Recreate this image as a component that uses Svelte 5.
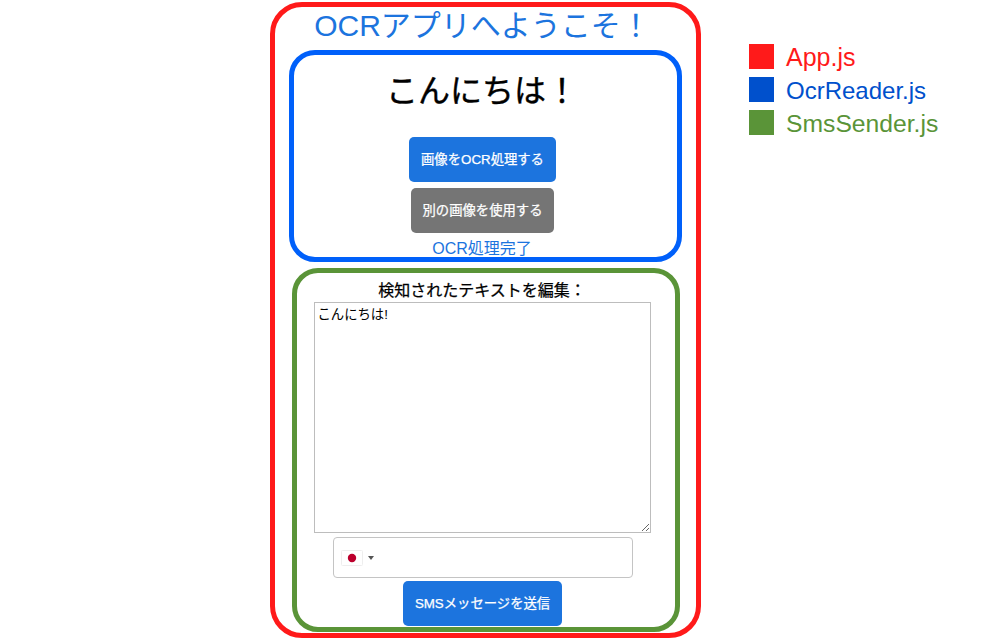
<script lang="ts">
	const legend = [
		{ name: 'App.js', color: '#ff1a1a', size: 25 },
		{ name: 'OcrReader.js', color: '#0050cc', size: 24 },
		{ name: 'SmsSender.js', color: '#5a9438', size: 24.7 }
	];

	let message = $state('こんにちは!');
	let phone = $state('');
</script>

<div class="page">
	<main class="app">
		<h1 class="title">OCRアプリへようこそ！</h1>

		<section class="reader">
			<h2 class="greeting">こんにちは！</h2>
			<button class="btn primary process">画像をOCR処理する</button>
			<button class="btn secondary">別の画像を使用する</button>
			<p class="status">OCR処理完了</p>
		</section>

		<section class="sender">
			<label class="editLabel" for="message">検知されたテキストを編集：</label>
			<textarea id="message" bind:value={message}></textarea>
			<div class="phone">
				<span class="flag">
					<svg width="22" height="16" viewBox="0 0 22 16" aria-hidden="true">
						<rect x="0.5" y="0.5" width="21" height="15" rx="1" fill="#fff" stroke="#eee" />
						<circle cx="11" cy="8" r="4.2" fill="#bc002d" />
					</svg>
				</span>
				<span class="caret"></span>
				<input type="tel" bind:value={phone} aria-label="phone" />
			</div>
			<button class="btn primary send">SMSメッセージを送信</button>
		</section>
	</main>

	<ul class="legend">
		{#each legend as item}
			<li style={`color: ${item.color}; font-size: ${item.size}px`}>
				<span class="swatch" style={`background: ${item.color}`}></span>
				<span class="name">{item.name}</span>
			</li>
		{/each}
	</ul>
</div>

<style>
	:global(body) {
		margin: 0;
		background: #fff;
		font-family: 'Liberation Sans', 'Noto Sans CJK JP', sans-serif;
	}

	.page {
		display: flex;
		align-items: flex-start;
		padding: 2px 0 0 270px;
		height: 640px;
		box-sizing: border-box;
		overflow: hidden;
	}

	.app {
		box-sizing: border-box;
		display: flex;
		flex-direction: column;
		align-items: center;
		width: 431px;
		height: 636px;
		border: 5px solid #ff1a1a;
		border-radius: 32px;
		flex-shrink: 0;
	}

	.title {
		margin: 0 6px 0 0;
		height: 38px;
		font-size: 30px;
		line-height: 38px;
		font-weight: 400;
		color: #1c74de;
		white-space: nowrap;
	}

	.reader {
		box-sizing: border-box;
		display: flex;
		flex-direction: column;
		align-items: center;
		width: 393px;
		height: 212px;
		margin-top: 5px;
		padding: 18px 7px 0 0;
		border: 5px solid #0060fa;
		border-radius: 26px;
	}

	.greeting {
		margin: 0 0 27px;
		font-size: 32px;
		line-height: 37px;
		font-weight: 400;
		color: #000;
		-webkit-text-stroke: 0.4px #000;
	}

	.btn {
		box-sizing: border-box;
		height: 45px;
		padding: 0 0 2px;
		border: none;
		border-radius: 5px;
		color: #fff;
		font-family: inherit;
		font-size: 13.33px;
		font-weight: 400;
		-webkit-text-stroke: 0.25px #fff;
		white-space: nowrap;
		flex-shrink: 0;
	}

	.primary {
		background: #1c74de;
	}

	.process {
		width: 147px;
		margin-left: 1px;
	}

	.secondary {
		background: #757575;
		width: 143px;
		margin: 6px 0 0 1px;
	}

	.status {
		margin: 7px 0 0;
		font-size: 16px;
		line-height: 18px;
		color: #1c74de;
		white-space: nowrap;
	}

	.sender {
		box-sizing: border-box;
		display: flex;
		flex-direction: column;
		align-items: center;
		width: 388px;
		height: 364px;
		margin-top: 6px;
		padding: 9px 7px 0 0;
		border: 5px solid #5a9438;
		border-radius: 26px;
	}

	.editLabel {
		font-size: 16px;
		line-height: 18px;
		font-weight: 400;
		color: #000;
		-webkit-text-stroke: 0.25px #000;
	}

	textarea {
		box-sizing: border-box;
		display: block;
		width: 337px;
		height: 231px;
		margin-top: 2px;
		padding: 2px 3px;
		border: 1px solid #bdbdbd;
		border-radius: 0;
		outline: none;
		font-family: inherit;
		font-size: 13.33px;
		line-height: 20px;
		color: #000;
		background: #fff;
	}

	.phone {
		box-sizing: border-box;
		display: flex;
		align-items: center;
		width: 300px;
		height: 41px;
		margin: 4px 0 0 2px;
		padding-left: 7px;
		border: 1px solid #c4c4c4;
		border-radius: 4px;
	}

	.flag {
		display: flex;
		width: 22px;
		height: 16px;
	}

	.caret {
		width: 0;
		height: 0;
		margin-left: 5px;
		border-left: 3px solid transparent;
		border-right: 3px solid transparent;
		border-top: 4px solid #555;
	}

	.phone input {
		flex: 1;
		min-width: 0;
		margin-left: 8px;
		border: none;
		outline: none;
		background: transparent;
		font-family: inherit;
		font-size: 13.33px;
	}

	.send {
		width: 159px;
		margin: 3px 0 0 1px;
	}

	.legend {
		list-style: none;
		margin: 42px 0 0 48px;
		padding: 0;
	}

	.legend li {
		display: flex;
		align-items: center;
		gap: 12px;
		height: 25px;
		margin-bottom: 8px;
		white-space: nowrap;
	}

	.name {
		margin-top: 2px;
	}

	.swatch {
		width: 25px;
		height: 25px;
		flex-shrink: 0;
	}
</style>
